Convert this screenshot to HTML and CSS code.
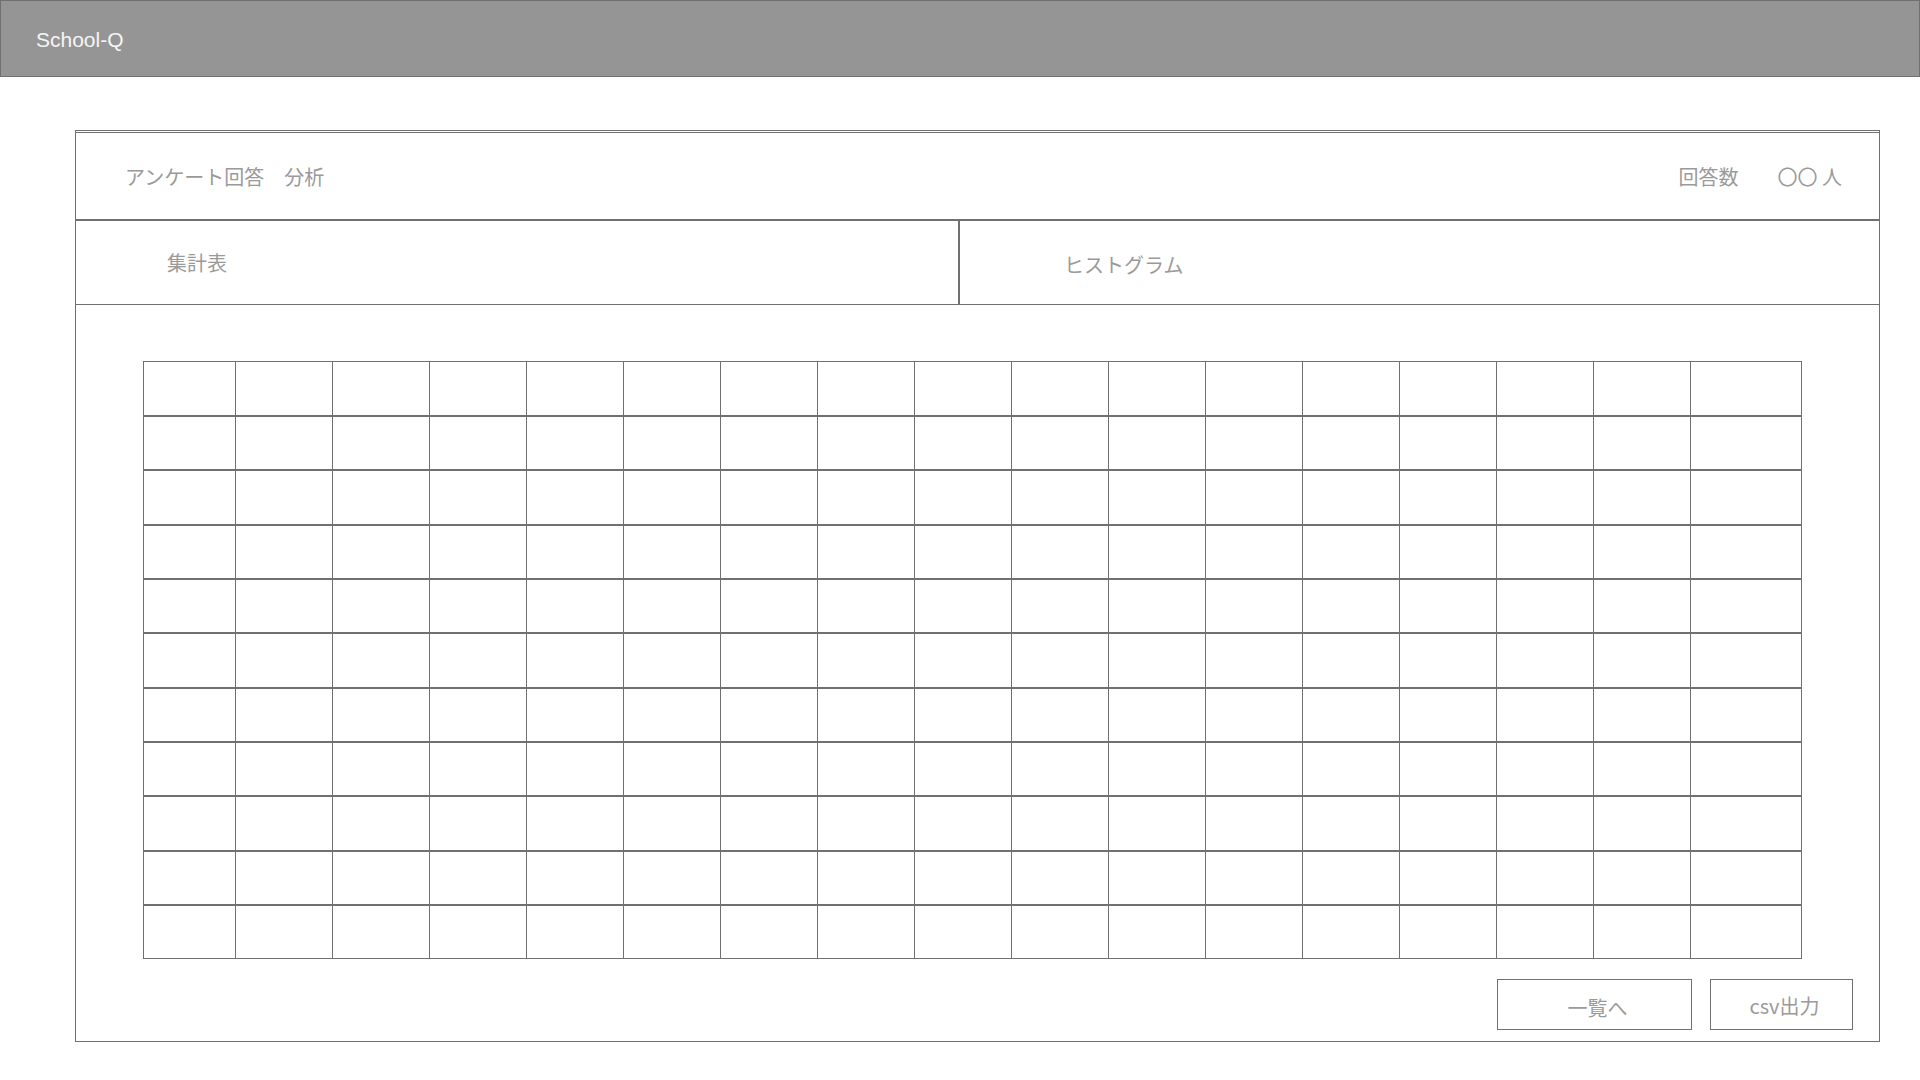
FILE: index.html
```html
<!DOCTYPE html>
<html lang="ja">
<head>
<meta charset="utf-8">
<title>School-Q</title>
<link rel="stylesheet" href="styles.css">
</head>
<body>
<header class="topbar"><span class="brand">School-Q</span></header>
<main class="main">
  <section class="panel">
    <div class="titlerow">
      <h1 class="title">アンケート回答　分析</h1>
      <div class="count"><span class="count-label">回答数</span><span class="count-val">〇〇 人</span></div>
    </div>
    <div class="tabs">
      <div class="tab tab-left">集計表</div>
      <div class="tab tab-right">ヒストグラム</div>
    </div>
    <div class="content">
      <table class="grid">
        <colgroup><col class="c-first"><col><col><col><col><col><col><col><col><col><col><col><col><col><col><col><col class="c-last"></colgroup>
        <tbody>
          <tr><td></td><td></td><td></td><td></td><td></td><td></td><td></td><td></td><td></td><td></td><td></td><td></td><td></td><td></td><td></td><td></td><td></td></tr>
          <tr><td></td><td></td><td></td><td></td><td></td><td></td><td></td><td></td><td></td><td></td><td></td><td></td><td></td><td></td><td></td><td></td><td></td></tr>
          <tr><td></td><td></td><td></td><td></td><td></td><td></td><td></td><td></td><td></td><td></td><td></td><td></td><td></td><td></td><td></td><td></td><td></td></tr>
          <tr><td></td><td></td><td></td><td></td><td></td><td></td><td></td><td></td><td></td><td></td><td></td><td></td><td></td><td></td><td></td><td></td><td></td></tr>
          <tr><td></td><td></td><td></td><td></td><td></td><td></td><td></td><td></td><td></td><td></td><td></td><td></td><td></td><td></td><td></td><td></td><td></td></tr>
          <tr><td></td><td></td><td></td><td></td><td></td><td></td><td></td><td></td><td></td><td></td><td></td><td></td><td></td><td></td><td></td><td></td><td></td></tr>
          <tr><td></td><td></td><td></td><td></td><td></td><td></td><td></td><td></td><td></td><td></td><td></td><td></td><td></td><td></td><td></td><td></td><td></td></tr>
          <tr><td></td><td></td><td></td><td></td><td></td><td></td><td></td><td></td><td></td><td></td><td></td><td></td><td></td><td></td><td></td><td></td><td></td></tr>
          <tr><td></td><td></td><td></td><td></td><td></td><td></td><td></td><td></td><td></td><td></td><td></td><td></td><td></td><td></td><td></td><td></td><td></td></tr>
          <tr><td></td><td></td><td></td><td></td><td></td><td></td><td></td><td></td><td></td><td></td><td></td><td></td><td></td><td></td><td></td><td></td><td></td></tr>
          <tr><td></td><td></td><td></td><td></td><td></td><td></td><td></td><td></td><td></td><td></td><td></td><td></td><td></td><td></td><td></td><td></td><td></td></tr>
        </tbody>
      </table>
      <div class="actions">
        <button class="btn btn-list">一覧へ</button>
        <button class="btn btn-csv">csv出力</button>
      </div>
    </div>
  </section>
</main>
</body>
</html>
```
FILE: styles.css
```css
* { box-sizing: border-box; }
html, body { margin: 0; padding: 0; background: #fff; }
body {
  font-family: "Noto Sans CJK JP", "Liberation Sans", sans-serif;
  color: #9a9a9a;
  width: 1920px;
  height: 1080px;
  overflow: hidden;
}
.topbar {
  height: 77px;
  background: #959595;
  border: 1px solid #707070;
  display: flex;
  align-items: center;
  padding-left: 35px;
}
.brand {
  font-family: "Liberation Sans", sans-serif;
  font-size: 21px;
  color: #f5f5f5;
  margin-top: 2px;
}
.main {
  padding: 53px 0 0 75px;
}
.panel {
  width: 1805px;
  border: 1px solid #707070;
  border-top: 3px double #707070;
}
.titlerow {
  height: 88px;
  border-bottom: 2px solid #707070;
  display: flex;
  align-items: center;
  justify-content: space-between;
  padding: 0 37px 0 49px;
}
.title {
  margin: 0;
  font-weight: 400;
  font-size: 20px;
  color: #9a9a9a;
}
.count {
  display: flex;
  font-size: 20px;
}
.count-label { margin-right: 39px; }
.tabs {
  display: flex;
  height: 84px;
  border-bottom: 1px solid #707070;
}
.tab {
  display: flex;
  align-items: center;
  font-size: 20px;
}
.tab-left {
  width: 884px;
  border-right: 2px solid #707070;
  padding-left: 91px;
}
.tab-right {
  flex: 1;
  padding-left: 104px;
  padding-top: 4px;
}
.content {
  padding: 56px 26px 11px 67px;
}
.grid {
  border-collapse: collapse;
  width: 1659px;
  table-layout: fixed;
}
.grid col { width: 97px; }
.grid col.c-first { width: 92px; }
.grid col.c-last { width: 111px; }
.grid td {
  height: 54px;
  border-left: 1px solid #707070;
  border-right: 1px solid #707070;
  border-top: 2px solid #707070;
  border-bottom: 2px solid #707070;
  padding: 0;
}
.grid tr:nth-child(3n) td { height: 55px; }
.grid tr:first-child td { border-top-width: 1px; }
.grid tr:last-child td { border-bottom-width: 1px; }
.actions {
  display: flex;
  justify-content: flex-end;
  gap: 18px;
  margin-top: 20px;
}
.btn {
  font-family: "Noto Sans CJK JP", "Liberation Sans", sans-serif;
  font-size: 20px;
  color: #9a9a9a;
  background: #fff;
  border: 1px solid #707070;
  height: 51px;
  padding: 6px 0 0 6px;
  cursor: pointer;
}
.btn-list { width: 195px; }
.btn-csv { width: 143px; padding-top: 2px; }
```
